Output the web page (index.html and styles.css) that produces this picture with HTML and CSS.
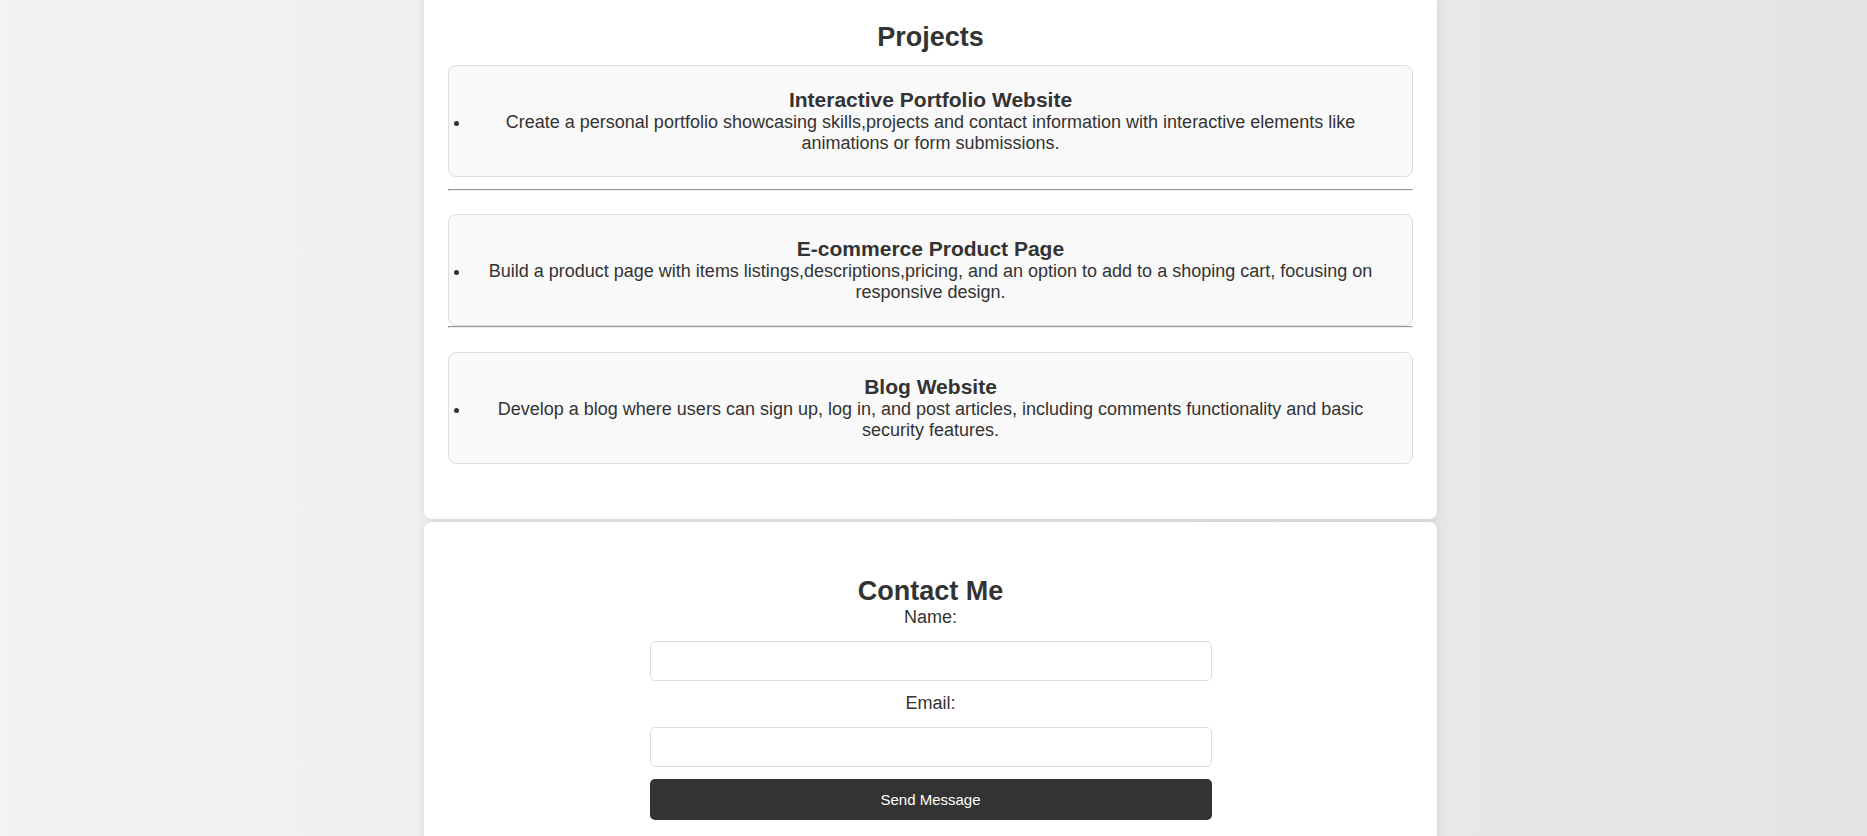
FILE: index.html
```html
<!DOCTYPE html>
<html lang="en">
<head>
<meta charset="utf-8">
<title>Portfolio</title>
<link rel="stylesheet" href="styles.css">
</head>
<body>
<main class="page">
  <section class="panel panel-projects">
    <h2 class="panel-title">Projects</h2>
    <div class="project-card">
      <h3 class="project-title">Interactive Portfolio Website</h3>
      <ul class="project-list">
        <li>Create a personal portfolio showcasing skills,projects and contact information with interactive elements like animations or form submissions.</li>
      </ul>
    </div>
    <hr class="divider divider-first">
    <div class="project-card">
      <h3 class="project-title">E-commerce Product Page</h3>
      <ul class="project-list">
        <li>Build a product page with items listings,descriptions,pricing, and an option to add to a shoping cart, focusing on responsive design.</li>
      </ul>
    </div>
    <hr class="divider divider-second">
    <div class="project-card">
      <h3 class="project-title">Blog Website</h3>
      <ul class="project-list">
        <li>Develop a blog where users can sign up, log in, and post articles, including comments functionality and basic security features.</li>
      </ul>
    </div>
  </section>
  <section class="panel panel-contact">
    <h2 class="panel-title contact-title">Contact Me</h2>
    <form class="contact-form">
      <label class="field-label" for="name">Name:</label>
      <input class="field-input" type="text" id="name">
      <label class="field-label" for="email">Email:</label>
      <input class="field-input" type="email" id="email">
      <button class="send-btn" type="button">Send Message</button>
    </form>
  </section>
</main>
</body>
</html>
```

FILE: styles.css
```css
html, body {
  margin: 0;
  padding: 0;
}

body {
  font-family: "Liberation Sans", Arial, sans-serif;
  font-size: 18px;
  color: #333;
  background: linear-gradient(to right, #f3f3f3, #e4e4e4);
  min-height: 836px;
  padding-right: 6px;
  box-sizing: border-box;
}

.page {
  width: 1013px;
  margin: 0 auto;
  display: flex;
  flex-direction: column;
  gap: 3px;
}

.panel {
  background: #fff;
  border-radius: 8px;
  box-shadow: 0 0 10px rgba(0, 0, 0, 0.1);
  padding: 0 24px;
  text-align: center;
}

.panel-projects {
  border-top-left-radius: 0;
  border-top-right-radius: 0;
  padding-top: 22px;
  padding-bottom: 55px;
}

.panel-contact {
  padding-top: 54px;
  padding-bottom: 60px;
}

.panel-title {
  font-size: 27px;
  font-weight: bold;
  margin: 0 0 12px;
  line-height: normal;
}

.contact-title {
  margin: 0;
}

.project-card {
  background: #f9f9f9;
  border: 1px solid #dedede;
  border-radius: 8px;
  padding: 22px;
}

.project-title {
  font-size: 21px;
  font-weight: bold;
  margin: 0;
}

.project-list {
  margin: 0;
  padding: 0;
}

.divider {
  color: gray;
  border-style: inset;
  border-width: 1px;
  margin: 12px 0 23px;
}

.divider-second {
  margin: 0 0 24px;
}

.contact-form {
  width: 562px;
  margin: 0 auto;
  display: flex;
  flex-direction: column;
}

.field-label {
  display: block;
  margin-bottom: 12.5px;
}

.field-input {
  box-sizing: border-box;
  width: 100%;
  height: 40px;
  border: 1px solid #ddd;
  border-radius: 5px;
  background: #fff;
  margin: 0 0 12.5px;
  font-family: inherit;
  font-size: 16px;
  padding: 0 10px;
}

.send-btn {
  box-sizing: border-box;
  width: 100%;
  height: 41px;
  border: none;
  border-radius: 5px;
  background: #333;
  color: #fff;
  font-family: "Liberation Sans", Arial, sans-serif;
  font-size: 15px;
  cursor: pointer;
}
```
